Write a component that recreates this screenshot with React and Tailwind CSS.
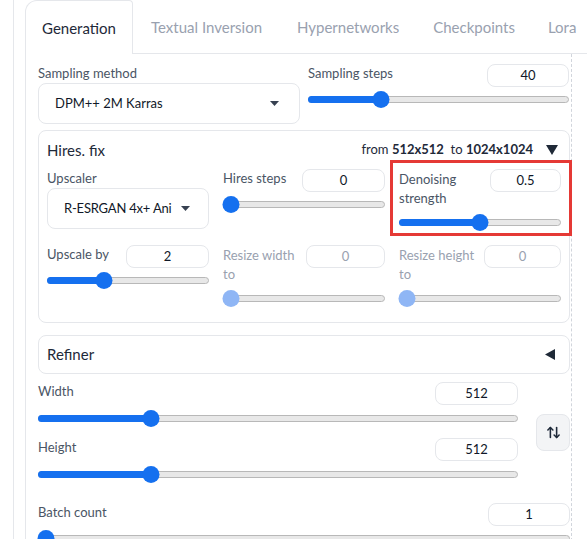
import React from "react";
import { ArrowUpDown } from "lucide-react";

const Slider = ({ pct, disabled = false, className = "" }) => (
  <div className={`relative h-4 flex items-center ${className}`}>
    <div className="w-full h-[7px] rounded-full bg-[#e8e8e8] border border-[#b8b8b8]" />
    <div
      className={`absolute left-0 h-[7px] rounded-full ${disabled ? "bg-transparent" : "bg-[#1570ef]"}`}
      style={{ width: `${pct}%` }}
    />
    <div
      className={`absolute w-[17px] h-[17px] rounded-full -translate-x-1/2 ${disabled ? "bg-[#8fb6f5]" : "bg-[#1570ef]"}`}
      style={{ left: `max(8px, ${pct}%)` }}
    />
  </div>
);

const NumBox = ({ value, w = "w-[83px]", disabled = false }) => (
  <div
    className={`${w} h-[23px] flex items-center justify-center rounded-lg border border-gray-200 text-[13px] ${disabled ? "text-gray-400" : "text-gray-900"}`}
  >
    {value}
  </div>
);

const Caret = () => (
  <svg width="9" height="5" viewBox="0 0 9 5">
    <path d="M0 0h9L4.5 5z" fill="#374151" />
  </svg>
);

const App = () => {
  return (
    <div
      className="w-[587px] h-[539px] overflow-hidden bg-white flex"
      style={{ fontFamily: "Lato, 'Noto Sans', sans-serif" }}
    >
      <div className="ml-[13px] border-l border-gray-200 pl-[11px] flex-1 flex flex-col">
        {/* tabs */}
        <div className="flex items-end h-[54px] text-[15px]">
          <div className="w-[108px] h-[54px] pt-[1px] border border-b-0 border-gray-200 rounded-tl-xl rounded-tr-sm flex items-center justify-center text-gray-800 bg-white">
            Generation
          </div>
          <div className="flex-1 h-[54px] pt-[1px] border-b border-gray-200 flex items-center text-gray-400">
            <span className="ml-[18px]">Textual Inversion</span>
            <span className="ml-[35px]">Hypernetworks</span>
            <span className="ml-[34px]">Checkpoints</span>
            <span className="ml-[33px] whitespace-nowrap">Lora</span>
          </div>
        </div>

        {/* panel */}
        <div className="flex-1 flex border-l border-gray-200">
          <div className="w-[545px] pl-3 pr-[1px]">
            {/* sampling row */}
            <div className="flex gap-2 mt-[11px]">
              <div className="w-[262px]">
                <div className="text-[13px] text-gray-600 leading-4">Sampling method</div>
                <div className="mt-[2px] h-[41px] rounded-lg border border-gray-200 flex items-center justify-between pl-4 pr-5 text-[13px] text-gray-900">
                  <span>DPM++ 2M Karras</span>
                  <Caret />
                </div>
              </div>
              <div className="w-[261px]">
                <div className="flex justify-between -mt-[1px]">
                  <span className="text-[13px] text-gray-600 leading-4 mt-[1px]">Sampling steps</span>
                  <NumBox value="40" w="w-[82px]" />
                </div>
                <Slider pct={28} className="mt-[4px]" />
              </div>
            </div>

            {/* hires fix */}
            <div className="mt-[6px] h-[193px] rounded-lg border border-gray-200 px-2">
              <div className="flex justify-between items-center mt-[9px] h-5">
                <span className="text-[15px] text-gray-800">Hires. fix</span>
                <span className="text-[13px] text-gray-800 flex items-center">
                  from&nbsp;<b>512x512</b>&nbsp;&nbsp;to&nbsp;<b>1024x1024</b>
                  <svg className="ml-[13px] mr-[3px]" width="12" height="10" viewBox="0 0 12 10">
                    <path d="M0 0h12L6 10z" fill="#1f2937" />
                  </svg>
                </span>
              </div>

              <div className="grid grid-cols-3 gap-x-[14px] mt-[9px]">
                {/* upscaler */}
                <div>
                  <div className="text-[13px] text-gray-600 leading-4 mt-[1px]">Upscaler</div>
                  <div className="mt-[2px] w-[162px] h-[41px] rounded-lg border border-gray-200 flex items-center gap-[10px] pl-4 text-[13px] text-gray-900 whitespace-nowrap">
                    <span className="tracking-[-0.2px]">R-ESRGAN 4x+ Ani</span>
                    <Caret />
                  </div>
                </div>
                {/* hires steps */}
                <div>
                  <div className="flex justify-between">
                    <span className="text-[13px] text-gray-600 leading-4 mt-[1px]">Hires steps</span>
                    <NumBox value="0" />
                  </div>
                  <Slider pct={0} className="mt-[4px]" />
                </div>
                {/* denoising */}
                <div className="relative">
                  <div className="flex justify-between">
                    <span className="text-[13px] text-gray-600 leading-[19px] mt-[1px]">
                      Denoising
                      <br />
                      strength
                    </span>
                    <NumBox value="0.5" w="w-[71px]" />
                  </div>
                  <Slider pct={50} className="mt-[6px]" />
                  <div className="absolute -left-[9px] -right-[11px] -top-[9px] -bottom-[6px] border-[3px] border-[#e53935] pointer-events-none" />
                </div>

                {/* upscale by */}
                <div className="mt-[15px]">
                  <div className="flex justify-between">
                    <span className="text-[13px] text-gray-600 leading-4 mt-[1px]">Upscale by</span>
                    <NumBox value="2" />
                  </div>
                  <Slider pct={35} className="mt-[4px]" />
                </div>
                <div className="mt-[15px]">
                  <div className="flex justify-between">
                    <span className="text-[13px] text-gray-400 leading-[19px] mt-[1px]">
                      Resize width
                      <br />
                      to
                    </span>
                    <NumBox value="0" w="w-[79px]" disabled />
                  </div>
                  <Slider pct={0} disabled className="mt-[6px]" />
                </div>
                <div className="mt-[15px]">
                  <div className="flex justify-between">
                    <span className="text-[13px] text-gray-400 leading-[19px] mt-[1px]">
                      Resize height
                      <br />
                      to
                    </span>
                    <NumBox value="0" w="w-[77px]" disabled />
                  </div>
                  <Slider pct={0} disabled className="mt-[6px]" />
                </div>
              </div>
            </div>

            {/* refiner */}
            <div className="mt-[12px] h-[39px] rounded-lg border border-gray-200 px-2 flex items-center justify-between">
              <span className="text-[15px] text-gray-800">Refiner</span>
              <svg className="mr-[6px]" width="10" height="11" viewBox="0 0 10 11">
                <path d="M10 0v11L0 5.5z" fill="#1f2937" />
              </svg>
            </div>

            {/* width / height */}
            <div className="flex items-center mt-[8px]">
              <div className="w-[481px]">
                <div className="flex justify-between items-start">
                  <span className="text-[13px] text-gray-600 leading-4 mt-[1px]">Width</span>
                  <NumBox value="512" />
                </div>
                <Slider pct={23.5} className="mt-[5px]" />
                <div className="flex justify-between items-start mt-[12px]">
                  <span className="text-[13px] text-gray-600 leading-4 mt-[1px]">Height</span>
                  <NumBox value="512" />
                </div>
                <Slider pct={23.5} className="mt-[5px]" />
              </div>
              <div className="ml-[18px] w-[34px] h-[37px] rounded-lg bg-gray-100 border border-gray-200 flex items-center justify-center text-gray-800">
                <ArrowUpDown size={15} strokeWidth={2.5} />
              </div>
            </div>

            {/* batch count */}
            <div className="mt-[21px]">
              <div className="flex justify-between">
                <span className="text-[13px] text-gray-600 leading-4 mt-[1px]">Batch count</span>
                <NumBox value="1" w="w-[82px]" />
              </div>
              <Slider pct={0} className="mt-[4px]" />
            </div>
          </div>
          <div className="border-r border-dashed border-gray-300" />
        </div>
      </div>
    </div>
  );
};

export default App;
